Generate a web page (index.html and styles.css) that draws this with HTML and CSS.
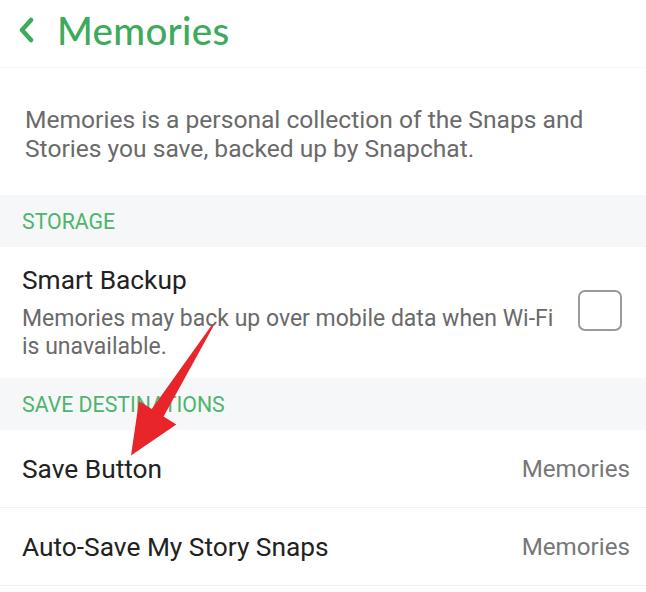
FILE: index.html
```html
<!DOCTYPE html>
<html>
<head>
<meta charset="utf-8">
<link rel="stylesheet" href="styles.css">
</head>
<body>
<div class="page">
  <header class="topbar">
    <svg class="back" width="18" height="26" viewBox="0 0 18 26"><path d="M14 3 L5 13 L14 23" fill="none" stroke="#3daa5c" stroke-width="4.5" stroke-linecap="round" stroke-linejoin="round"/></svg>
    <h1 class="title">Memories</h1>
  </header>
  <p class="intro">Memories is a personal collection of the Snaps and Stories you save, backed up by Snapchat.</p>
  <div class="section">STORAGE</div>
  <div class="row backup">
    <div class="backup-text">
      <div class="row-title">Smart Backup</div>
      <div class="row-sub">Memories may back up over mobile data when <span class="nowrap">Wi-Fi</span> is unavailable.</div>
    </div>
    <div class="checkbox"></div>
  </div>
  <div class="section">SAVE DESTINATIONS</div>
  <div class="row item">
    <span class="row-title">Save Button</span>
    <span class="row-value">Memories</span>
  </div>
  <div class="row item">
    <span class="row-title">Auto-Save My Story Snaps</span>
    <span class="row-value">Memories</span>
  </div>
  <svg class="arrow" width="646" height="592" viewBox="0 0 646 592">
    <polygon fill="#e8252b" points="213.8,325.5 212.2,324.5 151.8,409 139,401 131,455.5 176.3,424.4 163.6,416.4"/>
  </svg>
</div>
</body>
</html>
```

FILE: styles.css
```css
html, body {
  margin: 0;
  padding: 0;
  background: #ffffff;
}
.page {
  position: relative;
  width: 646px;
  height: 592px;
  overflow: hidden;
  font-family: Roboto, "Liberation Sans", sans-serif;
}
.topbar {
  height: 68px;
  display: flex;
  align-items: center;
  padding-left: 17px;
  box-sizing: border-box;
  border-bottom: 1px solid #f6f7f6;
  padding-bottom: 8px;
}
.back {
  display: block;
}
.title {
  margin: 0 0 0 22px;
  font-family: Lato, "Noto Sans", sans-serif;
  font-weight: 500;
  font-size: 38.5px;
  color: #3daa5c;
  letter-spacing: 0.3px;
}
.intro {
  margin: 0;
  padding: 37px 20px 30px 25px;
  font-size: 24.6px;
  line-height: 29px;
  color: #6a6a6a;
  height: 127px;
  box-sizing: border-box;
}
.section {
  background: #f6f7f8;
  height: 52px;
  display: flex;
  align-items: center;
  padding-left: 22px;
  font-size: 21.3px;
  color: #4db56c;
  box-sizing: border-box;
}
.row {
  display: flex;
  align-items: center;
  padding: 0 16px 0 22px;
  box-sizing: border-box;
}
.backup {
  height: 131px;
  align-items: flex-start;
  padding-top: 17px;
  padding-right: 24px;
}
.backup-text {
  flex: 1;
  margin-right: 12px;
}
.row-title {
  font-size: 26.3px;
  color: #222222;
  line-height: 32px;
}
.row-sub {
  margin-top: 9px;
  font-size: 23px;
  line-height: 28px;
  color: #6a6a6a;
}
.nowrap {
  white-space: nowrap;
}
.checkbox {
  width: 40px;
  height: 37px;
  border: 2.5px solid #9a9a9a;
  border-radius: 7px;
  margin-top: 26px;
}
.item {
  height: 78px;
  justify-content: space-between;
  border-bottom: 1px solid #f1f2f2;
}
.row-value {
  font-size: 24.2px;
  color: #777777;
}
.arrow {
  position: absolute;
  left: 0;
  top: 0;
  pointer-events: none;
}
```
